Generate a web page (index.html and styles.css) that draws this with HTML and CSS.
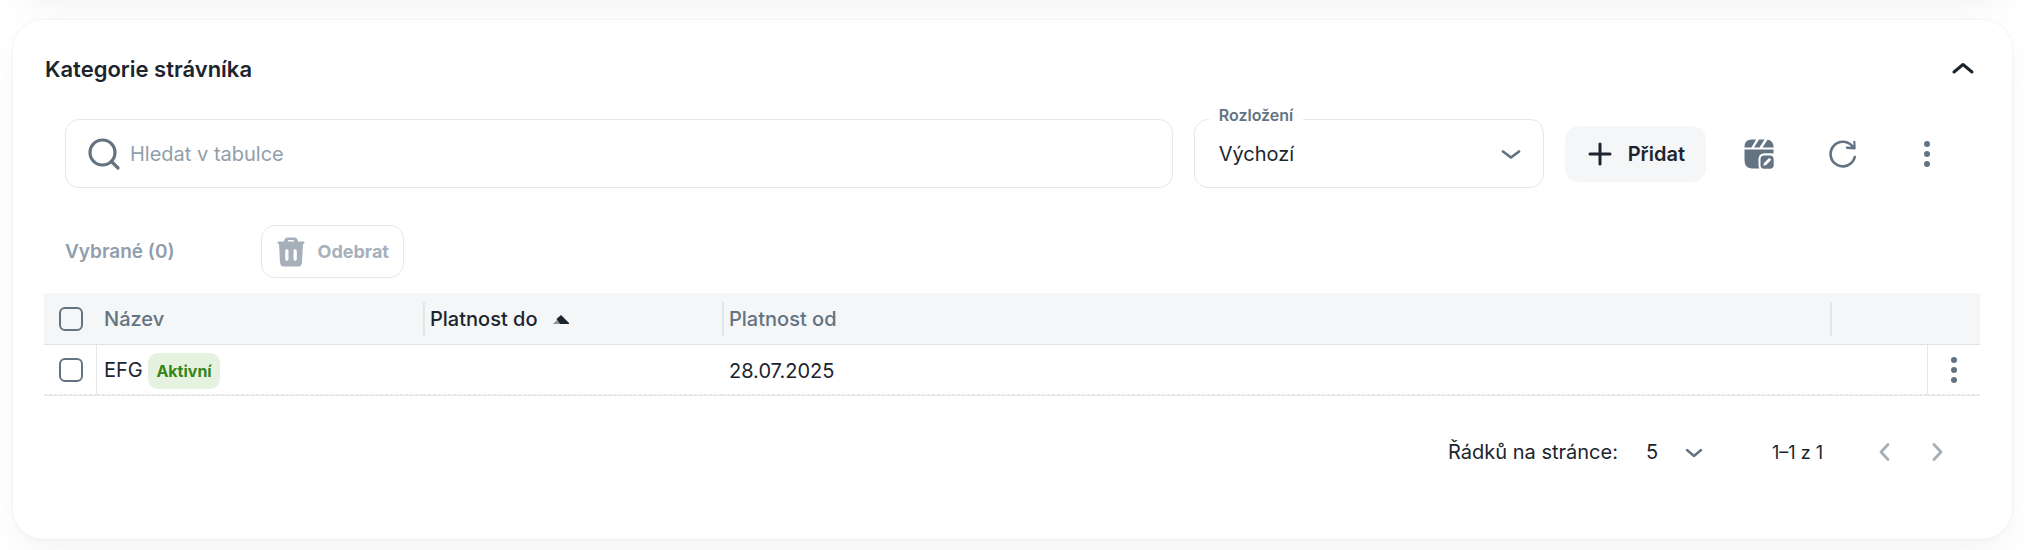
FILE: index.html
```html
<!DOCTYPE html>
<html lang="cs">
<head>
    <meta charset="UTF-8">
    <meta name="viewport" content="width=device-width, initial-scale=1.0">
    <title>Kategorie strávníka</title>
    <link rel="stylesheet" href="styles.css">
</head>
<body>

<div class="card card-previous"></div>

<section class="card">
    <header class="card-header">
        <h2>Kategorie strávníka</h2>
        <button type="button" class="icon-button dark" aria-label="Sbalit">
            <svg width="30" height="30" viewBox="0 0 30 30"><path d="M6 18l9-7.500 9 7.500" stroke-width="3"/></svg>
        </button>
    </header>

    <!-- Panel nástrojů -->
    <div class="toolbar">
        <div class="search">
            <svg width="34" height="34" viewBox="0 0 34 34"><circle cx="15.500" cy="15.500" r="12.500" stroke-width="3.200"/><path d="M24.500 24.500l6.500 6.500" stroke-width="3.200"/></svg>
            <input type="text" placeholder="Hledat v tabulce" aria-label="Hledat v tabulce">
        </div>
        <div class="layout-field">
            <label for="layout">Rozložení</label>
            <select id="layout">
                <option>Výchozí</option>
            </select>
            <svg class="arrow" width="24" height="24" viewBox="0 0 24 24"><path d="M4 9.500l8 6 8-6" stroke-width="2.800"/></svg>
        </div>
        <button type="button" class="add-button">
            <svg width="26" height="26" viewBox="0 0 26 26"><path d="M13 3v20M3 13h20" stroke-width="3"/></svg>
            Přidat
        </button>
        <div class="actions">
            <button type="button" class="icon-button" aria-label="Upravit zobrazení">
                <svg width="30" height="30" viewBox="0 0 30 30">
                    <g class="solid">
                        <path d="M7.500.5H12L7.500 8.500H.5C.5 3.500 2.500.8 7.500.5z"/>
                        <path d="M15 .5h5.500L15.500 8.500H10z"/>
                        <path d="M23.500.7c4 .6 6 3.300 6 7.800H18.500z"/>
                        <path d="M.5 10.500h29v4.300c-1-.4-2.200-.5-4-.5h-3.500c-6 0-7.500 2-7.500 7.500v3c0 2 .2 3.500.8 4.700H10C3 29.500.5 27.500.5 20z"/>
                        <path fill-rule="evenodd" d="M21 16.500h4c3.500 0 4.700 1.200 4.700 4.700v4c0 3.500-1.200 4.500-4.700 4.500h-4c-3.500 0-4.500-1-4.500-4.500v-4c0-3.500 1-4.700 4.500-4.700zM19.300 26.800l2.800-.7 4.500-4.700c1-1-.9-3-2-2L20 24z"/>
                    </g>
                </svg>
            </button>
            <button type="button" class="icon-button" aria-label="Obnovit">
                <svg width="30" height="30" viewBox="0 0 30 30"><path d="M26.800 18A12.300 12.300 0 1 1 25 8" stroke-width="2.600"/><path class="solid" d="M25.200 2.500c0-1 2-1 2.200 0l.3 6.500c0 1-.7 1.700-1.700 1.600l-7-.5c-1.500-.2-1.500-2.600 0-2.500l4.500.2L25.500 6z"/></svg>
            </button>
            <button type="button" class="icon-button" aria-label="Další možnosti">
                <svg width="30" height="30" viewBox="0 0 30 30"><g class="solid"><circle cx="15" cy="5" r="3"/><circle cx="15" cy="15" r="3"/><circle cx="15" cy="25" r="3"/></g></svg>
            </button>
        </div>
    </div>

    <!-- Hromadné akce -->
    <div class="selection">
        <span class="selected-count">Vybrané (0)</span>
        <button type="button" class="remove-button" disabled>
            <svg width="30" height="30" viewBox="0 0 30 30">
                <path class="solid" fill-rule="evenodd" d="M8 4.500C8.500 1.500 9.500.5 12 .5h6c2.500 0 3.500 1 4 4h5c2 0 2 2.500 0 2.500L26 25c-.2 3.300-1.500 4.500-4 4.500H8C5.500 29.500 4.200 28.300 4 25L3 7C1 7 1 4.500 3 4.500zM11.500 4.500h7L17.500 3h-5zM9.200 14v8c0 2.400 3.300 2.400 3.300 0v-8c0-2.400-3.300-2.400-3.300 0zM17.500 14v8c0 2.400 3.300 2.400 3.300 0v-8c0-2.400-3.300-2.400-3.300 0z"/>
            </svg>
            Odebrat
        </button>
    </div>

    <table class="data-table">
        <colgroup>
            <col class="col-check">
            <col class="col-name">
            <col class="col-to">
            <col>
            <col class="col-space">
            <col class="col-menu">
        </colgroup>
        <thead>
            <tr>
                <th class="check-cell"><input type="checkbox" aria-label="Vybrat vše"></th>
                <th>Název</th>
                <th class="separated sorted">Platnost do
                    <svg class="sort" width="16" height="10" viewBox="0 0 16 10"><path fill="#8b939c" d="M0 9l4-4 3 4z"/><path fill="#1c252e" d="M8 0l8 8v1H7L3.500 4z"/></svg>
                </th>
                <th class="separated">Platnost od</th>
                <th class="separated" colspan="2"></th>
            </tr>
        </thead>
        <tbody>
            <tr>
                <td class="check-cell"><input type="checkbox" aria-label="Vybrat EFG"></td>
                <td>EFG <span class="badge">Aktivní</span></td>
                <td></td>
                <td>28.07.2025</td>
                <td></td>
                <td class="menu-cell">
                    <button type="button" class="icon-button" aria-label="Akce řádku">
                        <svg width="30" height="30" viewBox="0 0 30 30"><g class="solid"><circle cx="15" cy="5" r="3"/><circle cx="15" cy="15" r="3"/><circle cx="15" cy="25" r="3"/></g></svg>
                    </button>
                </td>
            </tr>
        </tbody>
    </table>

    <!-- Stránkování -->
    <footer class="pagination">
        <label for="pageSize">Řádků na stránce:</label>
        <div class="page-size">
            <select id="pageSize">
                <option>5</option>
            </select>
            <svg class="arrow" width="20" height="20" viewBox="0 0 20 20"><path d="M3 8l7 6 7-6" stroke-width="2.400"/></svg>
        </div>
        <span class="page-range">1–1 z 1</span>
        <button type="button" class="page-button" aria-label="Předchozí" disabled>
            <svg width="20" height="20" viewBox="0 0 20 20"><path d="M13 2.500L6 10l7 7.500" stroke-width="2.800"/></svg>
        </button>
        <button type="button" class="page-button" aria-label="Další" disabled>
            <svg width="20" height="20" viewBox="0 0 20 20"><path d="M7 2.500l7 7.500-7 7.500" stroke-width="2.800"/></svg>
        </button>
    </footer>
</section>

</body>
</html>
```
FILE: styles.css
```css
* {
    box-sizing: border-box;
}
body {
    margin: 0;
    padding: 0 20px 11px 13px;
    background-color: #fff;
    color: #1c252e;
    font-family: Inter, "Liberation Sans", sans-serif;
    font-size: 20px;
    overflow: hidden;
}
button, input, select {
    font: inherit;
    color: inherit;
}
button {
    border: none;
    background: none;
    padding: 0;
    cursor: pointer;
}
svg {
    display: block;
    flex: none;
    fill: none;
    stroke: currentColor;
    stroke-linecap: round;
    stroke-linejoin: round;
}
.solid, .sort {
    fill: currentColor;
    stroke: none;
}
.card {
    position: relative;
    padding: 24px 32px 72px 31px;
    background-color: #fff;
    border-radius: 30px;
    box-shadow: 0 0 3px rgba(145, 158, 171, 0.2), 0 15px 30px -5px rgba(145, 158, 171, 0.12);
}
.card-previous {
    height: 80px;
    margin-top: -84px;
    margin-bottom: 24px;
    padding: 0;
}
.card-header {
    display: flex;
    align-items: center;
    justify-content: space-between;
    height: 50px;
    padding: 0 2px 0 1px;
}
.card-header h2 {
    margin: 0;
    font-size: 22px;
    font-weight: 600;
}
.icon-button {
    display: flex;
    color: #637381;
}
.icon-button.dark {
    color: #1c252e;
}
.toolbar {
    display: flex;
    align-items: center;
    gap: 21px;
    padding: 25px 0 0 21px;
}
.search {
    display: flex;
    flex: 1;
    align-items: center;
    gap: 9px;
    height: 69px;
    padding: 0 21px;
    border: 1px solid #e5e8eb;
    border-radius: 14px;
    color: #637381;
}
.search input {
    flex: 1;
    padding: 0;
    border: none;
    outline: none;
    background: none;
    color: #1c252e;
}
.search input::placeholder {
    color: #919eab;
    opacity: 1;
}
.layout-field {
    position: relative;
    width: 350px;
}
.layout-field label {
    position: absolute;
    top: -14px;
    left: 15px;
    padding: 0 10px;
    background-color: #fff;
    color: #637381;
    font-size: 16px;
    font-weight: 600;
    line-height: 20px;
}
.layout-field select {
    display: block;
    width: 100%;
    height: 69px;
    padding: 0 50px 0 24px;
    border: 1px solid #e5e8eb;
    border-radius: 14px;
    background: none;
    appearance: none;
}
.arrow {
    position: absolute;
    top: 0;
    bottom: 0;
    right: 0;
    margin: auto 0;
    color: #637381;
    pointer-events: none;
}
.layout-field .arrow {
    right: 21px;
}
.add-button {
    display: flex;
    align-items: center;
    gap: 15px;
    height: 56px;
    padding: 0 21px 0 22px;
    border-radius: 14px;
    background-color: #f4f6f8;
    font-weight: 600;
}
.actions {
    display: flex;
    gap: 54px;
    padding: 0 38px 0 17px;
}
.selection {
    display: flex;
    align-items: center;
    gap: 86px;
    padding: 37px 0 15px 21px;
}
.selected-count {
    color: #919eab;
    font-size: 19px;
    font-weight: 600;
}
.remove-button {
    display: flex;
    align-items: center;
    gap: 12px;
    height: 53px;
    padding: 0 14px;
    border: 1px solid #e5e8eb;
    border-radius: 14px;
    color: #a6b0ba;
    font-size: 18px;
    font-weight: 700;
}
.data-table {
    width: 100%;
    table-layout: fixed;
    border-collapse: separate;
    border-spacing: 0;
    border-bottom: 1px solid #e5e8eb;
}
.col-check {
    width: 53px;
}
.col-name {
    width: 326px;
}
.col-to {
    width: 299px;
}
.col-space {
    width: 97px;
}
.col-menu {
    width: 53px;
}
.data-table th, .data-table td {
    padding: 0 7px;
    text-align: left;
    white-space: nowrap;
}
.data-table th {
    height: 52px;
    border-bottom: 1px solid #dfe3e8;
    background-color: #f4f6f8;
    color: #637381;
    font-weight: 500;
}
.data-table th.sorted {
    color: #1c252e;
}
.data-table th.separated {
    background-image: linear-gradient(#e3e6e9, #e3e6e9);
    background-size: 2px 34px;
    background-position: left center;
    background-repeat: no-repeat;
}
.data-table td {
    height: 50px;
    padding-top: 2px;
    border-bottom: 1px dashed #e5e8eb;
}
.sort {
    display: inline-block;
    margin-left: 10px;
    vertical-align: middle;
}
.data-table .check-cell {
    padding: 0 0 0 15px;
}
.data-table td.check-cell {
    border-right: 1px solid #e5e8eb;
}
.data-table td.menu-cell {
    padding: 0 0 0 11px;
    border-left: 1px solid #e5e8eb;
}
.check-cell input {
    display: block;
    width: 24px;
    height: 24px;
    margin: 0;
    border: 2px solid #637381;
    border-radius: 6px;
    appearance: none;
}
.badge {
    display: inline-block;
    height: 36px;
    padding: 0 8px;
    border-radius: 10px;
    background-color: #e5f2df;
    color: #36861a;
    font-size: 16px;
    font-weight: 700;
    line-height: 36px;
}
.pagination {
    display: flex;
    align-items: center;
    justify-content: flex-end;
    padding: 41px 33px 0 0;
}
.page-size {
    position: relative;
    width: 58px;
    margin-left: 28px;
}
.page-size select {
    display: block;
    width: 100%;
    height: 30px;
    padding: 0;
    border: none;
    background: none;
    appearance: none;
}
.page-range {
    margin-left: 68px;
    margin-right: 52px;
    font-size: 18px;
}
.page-button {
    color: #a6b0ba;
}
.page-button + .page-button {
    margin-left: 32px;
}
```
